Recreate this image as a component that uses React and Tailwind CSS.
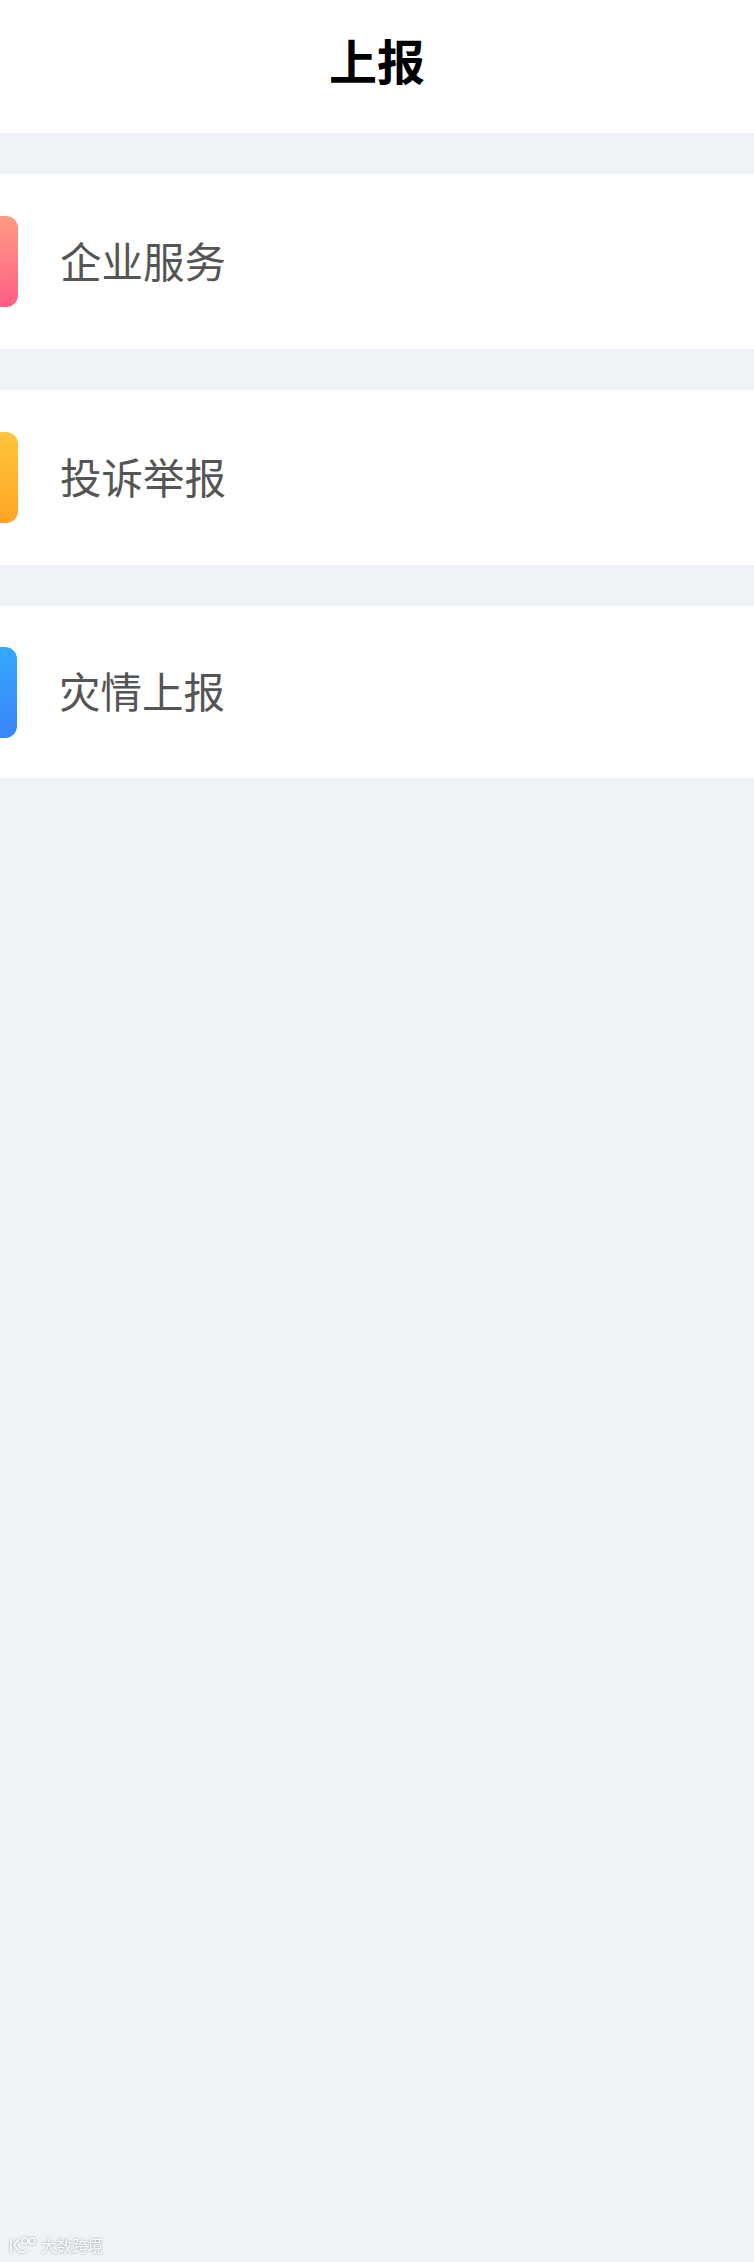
const CJK = "font-['Noto_Sans_CJK_SC','Noto_Sans_CJK_JP',sans-serif]";

function Row({ label, h, gradient, ml }) {
  return (
    <div className={`flex items-center bg-white ${h}`}>
      <div className={`h-[91px] w-[91px] shrink-0 rounded-[12px] bg-gradient-to-b ${ml} ${gradient}`} />
      <span className="ml-[42px] -translate-y-[1px] text-[41.5px] leading-none text-[#555555]">{label}</span>
    </div>
  );
}

export default function App() {
  return (
    <div className={`relative flex h-[2262px] w-[754px] flex-col overflow-hidden bg-[#eff2f7] ${CJK}`}>
      <header className="flex h-[133px] items-center justify-center bg-white pb-[15px]">
        <h1 className="text-[48px] font-bold leading-none text-black">上报</h1>
      </header>
      <div className="mt-[41px] flex flex-col gap-[41px]">
        <Row label="企业服务" h="h-[175px]" gradient="from-[#ff9a83] to-[#ff5c84]" ml="-ml-[73px]" />
        <Row label="投诉举报" h="h-[175px]" gradient="from-[#ffc53c] to-[#ffa526]" ml="-ml-[73px]" />
        <Row label="灾情上报" h="h-[172px]" gradient="from-[#35a8fd] to-[#3a85f8]" ml="-ml-[74px]" />
      </div>
      <div className="absolute bottom-[6px] left-[8px] flex items-center gap-[3px] text-white drop-shadow-[0_0_1px_#8f949b]">
        <svg width="30" height="20" viewBox="0 0 30 20" fill="none" stroke="currentColor" strokeWidth="1.6">
          <path d="M3 3v14M11 3 6 9l6 8" />
          <path d="M12 15c3 2 5 1 6-1" />
          <circle cx="17" cy="5" r="3" />
          <circle cx="24" cy="5" r="3" />
        </svg>
        <span className="text-[15.5px] leading-none">大数跨境</span>
      </div>
    </div>
  );
}
